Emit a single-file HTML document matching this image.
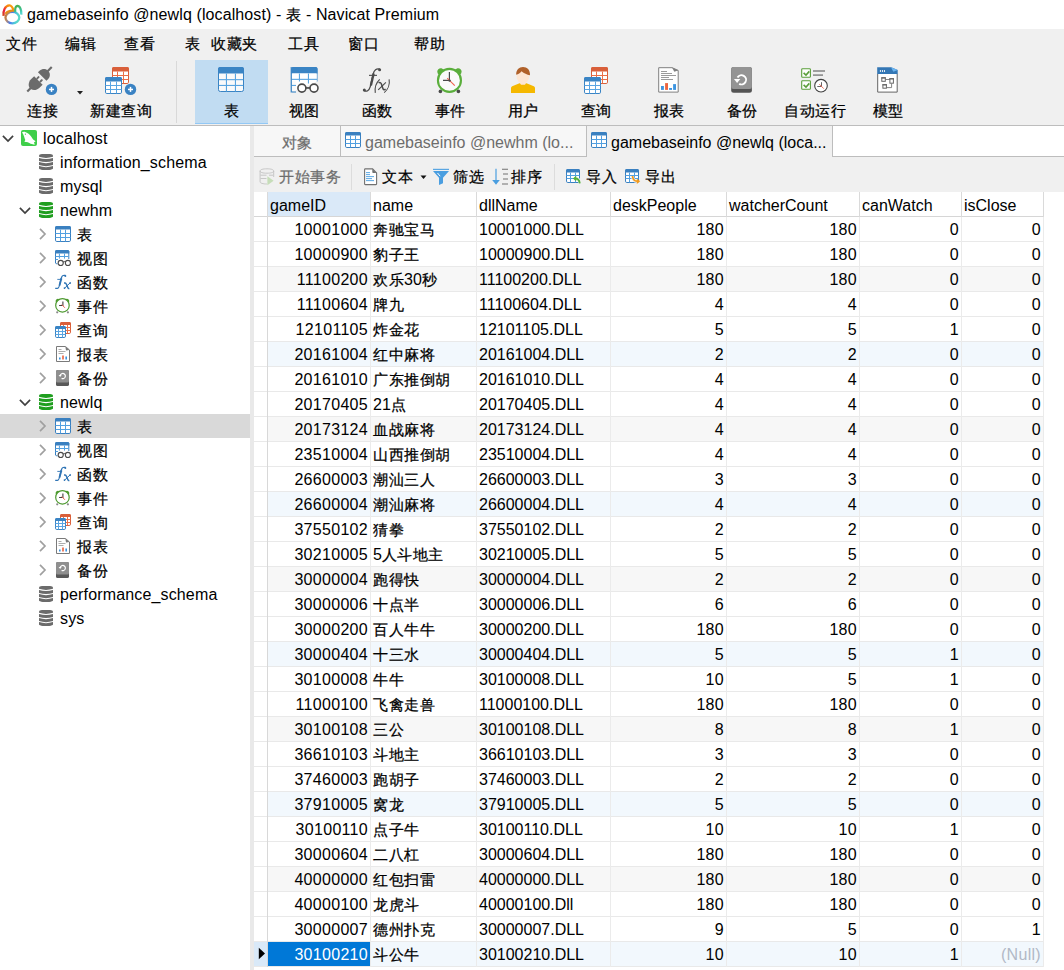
<!DOCTYPE html><html><head><meta charset="utf-8"><style>*{box-sizing:border-box;margin:0;padding:0}
html,body{width:1064px;height:970px;overflow:hidden;background:#f0f0f0;font-family:"Liberation Sans",sans-serif;font-size:16px;color:#000;position:relative}
.a{position:absolute;white-space:nowrap}
#title{position:absolute;left:0;top:0;width:1064px;height:29px;background:#fff}
#title .t{position:absolute;left:27px;top:0;line-height:29px;font-size:16px;letter-spacing:0.1px}
.menu{position:absolute;top:30px;line-height:28px;font-size:16px}
.tbtn{position:absolute;top:60px;width:73px;height:64px;text-align:center}
.tbtn .lbl{position:absolute;left:0;top:99px;width:73px;text-align:center;line-height:24px}
#tbsel{position:absolute;left:195px;top:60px;width:73px;height:64px;background:#c1dcf2;border-bottom:1px solid #92c8f5}
#tbsep{position:absolute;left:176px;top:61px;width:1px;height:62px;background:#d9d9d9}
#tbline{position:absolute;left:0;top:125px;width:1064px;height:1px;background:#bdbdbd}
#left{position:absolute;left:0;top:126px;width:250px;height:844px;background:#fff}
#split{position:absolute;left:250px;top:126px;width:4px;height:844px;background:#e9e9e9}
.tr{position:absolute;left:0;width:250px;height:24px;line-height:24px}
.tr .tx{position:absolute;top:0}
.trsel{background:#d9d9d9}
#tabs{position:absolute;left:254px;top:126px;width:810px;height:31px}
.tab{position:absolute;top:0;height:31px;line-height:33px;color:#6d6d6d;background:#f7f7f7;border-bottom:1px solid #bdbdbd}
#grid{position:absolute;left:254px;top:192px;width:810px;height:778px;background:#fff}
#gridwrap{position:absolute;left:0;top:0}
.hdr{position:absolute;left:254px;width:789px;height:25px;background:#fff;border-bottom:1px solid #d6d6d6}
.hc{position:absolute;height:24px;line-height:28px;padding-left:2px}
.hsel{background:#dae9f8}
.row{position:absolute;left:254px;width:789px;height:25px;background:#fff;border-bottom:1px solid #e9e9e9}
.rg{background:#f7f7f7}
.rb{background:#f2f8fd}
.c{position:absolute;height:24px;line-height:26px;white-space:nowrap;overflow:hidden}
.c.r{text-align:right;padding-right:2px;letter-spacing:0.3px}
.c.l{padding-left:2px}
.csel{background:#0078d7;color:#fff}
.null{color:#b1b8c6}
.vl{position:absolute;width:1px;background:#e3e3e3}
.tl{position:absolute;top:99px;width:100px;text-align:center;line-height:24px;white-space:nowrap}
.tx{position:absolute;line-height:26px;white-space:nowrap;letter-spacing:0.15px}
.t2{position:absolute;top:166px;line-height:22px;white-space:nowrap}
.cj{font-size:15px;letter-spacing:0.5px;-webkit-text-stroke:0.25px currentColor}
</style></head><body>
<div id="title">
<svg class="a" style="left:0;top:0" width="26" height="28" viewBox="0 0 26 28">
<ellipse cx="12.4" cy="17.6" rx="6.9" ry="5.7" fill="none" stroke="url(#lgb)" stroke-width="2.3"/>
<path d="M3.6,15.8 C2.8,10.5 5.3,5.6 9.3,5.3 C11.8,5.1 12.8,7.6 14.1,11.4" fill="none" stroke="url(#lgl)" stroke-width="2.3"/>
<path d="M5.4,13.8 C7,11.4 9.6,10.4 13.6,10.6" fill="none" stroke="#e58d1c" stroke-width="2.1"/>
<path d="M15.2,12.4 C14.9,8.3 15.9,6.1 17.3,5.9 C19.9,5.9 21.6,9.6 21.3,14.6" fill="none" stroke="url(#lgr)" stroke-width="2.3"/>
<defs>
<linearGradient id="lgb" x1="0" y1="0" x2="1" y2="0.2"><stop offset="0" stop-color="#c4722e"/><stop offset=".2" stop-color="#b98a6a"/><stop offset=".5" stop-color="#4a7ef0"/><stop offset=".8" stop-color="#4cc8d8"/><stop offset="1" stop-color="#5ad8c8"/></linearGradient>
<linearGradient id="lgl" x1="0" y1="1" x2="1" y2="0"><stop offset="0" stop-color="#d2481a"/><stop offset=".3" stop-color="#ea1a40"/><stop offset=".6" stop-color="#f7840e"/><stop offset="1" stop-color="#f9a80c"/></linearGradient>
<linearGradient id="lgr" x1="0" y1="0" x2="0.3" y2="1"><stop offset="0" stop-color="#4aae48"/><stop offset=".6" stop-color="#3cc090"/><stop offset="1" stop-color="#54d6cc"/></linearGradient>
</defs></svg>
<div class="t">gamebaseinfo @newlq (localhost) - <span class="cj">表</span> - Navicat Premium</div></div>
<div class="menu" style="left:6px"><span class="cj">文件</span></div>
<div class="menu" style="left:65px"><span class="cj">编辑</span></div>
<div class="menu" style="left:124px"><span class="cj">查看</span></div>
<div class="menu" style="left:185px"><span class="cj">表</span></div>
<div class="menu" style="left:211px"><span class="cj">收藏夹</span></div>
<div class="menu" style="left:288px"><span class="cj">工具</span></div>
<div class="menu" style="left:348px"><span class="cj">窗口</span></div>
<div class="menu" style="left:414px"><span class="cj">帮助</span></div>
<div id="tbsel"></div><div id="tbsep"></div><div id="tbline"></div>
<div class="tl" style="left:-7.5px"><span class="cj">连接</span></div>
<div class="tl" style="left:71px"><span class="cj">新建查询</span></div>
<div class="tl" style="left:181.5px"><span class="cj">表</span></div>
<div class="tl" style="left:254px"><span class="cj">视图</span></div>
<div class="tl" style="left:327px"><span class="cj">函数</span></div>
<div class="tl" style="left:400px"><span class="cj">事件</span></div>
<div class="tl" style="left:473px"><span class="cj">用户</span></div>
<div class="tl" style="left:546px"><span class="cj">查询</span></div>
<div class="tl" style="left:619px"><span class="cj">报表</span></div>
<div class="tl" style="left:692px"><span class="cj">备份</span></div>
<div class="tl" style="left:765px"><span class="cj">自动运行</span></div>
<div class="tl" style="left:838px"><span class="cj">模型</span></div>
<svg class="a" style="left:24px;top:64px" width="36" height="34" viewBox="0 0 36 34">
<g transform="translate(15.5,15.3) rotate(-45)">
<path d="M-1.6,-6 L-6,-6 C-10,-6 -12.6,-3.2 -12.9,-1.3 L-12.9,1.3 C-12.6,3.2 -10,6 -6,6 L-1.6,6 Z" fill="#6b6b6b"/>
<rect x="-1.8" y="-3.2" width="3.6" height="1.9" rx="0.6" fill="#6b6b6b"/><rect x="-1.8" y="1.3" width="3.6" height="1.9" rx="0.6" fill="#6b6b6b"/>
<rect x="-17.3" y="-1.1" width="5" height="2.2" fill="#6b6b6b"/>
<path d="M3.8,-6 L6,-6 C9.8,-6 12,-3 12,-1 L12,1 C12,3 9.8,6 6,6 L3.8,6 Z" fill="#6b6b6b"/>
<rect x="11.5" y="-1.1" width="5.8" height="2.2" fill="#6b6b6b"/>
</g>
<circle cx="27.5" cy="25.4" r="5.7" fill="#3a82c3"/><rect x="25" y="24.7" width="5" height="1.5" fill="#fff"/><rect x="26.75" y="22.9" width="1.5" height="5" fill="#fff"/>
</svg>
<svg class="a" style="left:76px;top:90px" width="8" height="6" viewBox="0 0 8 6"><path d="M1,1 H7 L4,4.5 Z" fill="#222"/></svg>
<svg class="a" style="left:112px;top:67px" width="17" height="17" viewBox="0 0 17 17"><rect x="0.5" y="0.5" width="16" height="16" rx="1.3" fill="#fff" stroke="#d95f3a"/><path d="M0,1.5 Q0,0 1.5,0 H15.5 Q17,0 17,1.5 V4.5 H0 Z" fill="#d95f3a"/><rect x="5" y="4.5" width="1" height="12.0" fill="#ea7048"/><rect x="11" y="4.5" width="1" height="12.0" fill="#ea7048"/><rect x="0.5" y="8" width="16" height="1" fill="#ea7048"/><rect x="0.5" y="12" width="16" height="1" fill="#ea7048"/></svg>
<svg class="a" style="left:105px;top:77px" width="17" height="17" viewBox="0 0 17 17"><rect x="0.5" y="0.5" width="16" height="16" rx="1.3" fill="#fff" stroke="#3a84c4"/><path d="M0,1.5 Q0,0 1.5,0 H15.5 Q17,0 17,1.5 V4.5 H0 Z" fill="#3a84c4"/><rect x="5" y="4.5" width="1" height="12.0" fill="#5aa5e2"/><rect x="11" y="4.5" width="1" height="12.0" fill="#5aa5e2"/><rect x="0.5" y="8" width="16" height="1" fill="#5aa5e2"/><rect x="0.5" y="12" width="16" height="1" fill="#5aa5e2"/></svg>
<svg class="a" style="left:124px;top:83px" width="13" height="13" viewBox="0 0 13 13"><circle cx="6.5" cy="6.4" r="5.7" fill="#3a82c3"/><rect x="4" y="5.7" width="5" height="1.5" fill="#fff"/><rect x="5.75" y="3.9" width="1.5" height="5" fill="#fff"/></svg>
<svg class="a" style="left:218px;top:67px" width="26" height="25" viewBox="0 0 26 25">
<rect x="0.5" y="0.5" width="25" height="24" rx="1.8" fill="#fafafa" stroke="#3a84c4"/>
<path d="M0,2 Q0,0 2,0 H24 Q26,0 26,2 V6.5 H0 Z" fill="#3a84c4"/>
<rect x="7.9" y="6.5" width="1.1" height="18" fill="#58a4e0"/><rect x="16.9" y="6.5" width="1.1" height="18" fill="#58a4e0"/>
<rect x="0.8" y="12.1" width="24.4" height="1.1" fill="#58a4e0"/><rect x="0.8" y="17.9" width="24.4" height="1.1" fill="#58a4e0"/>
</svg>
<svg class="a" style="left:290px;top:66px" width="32" height="28" viewBox="0 0 32 28">
<path d="M1.7,26 V2.6 Q1.7,1.5 2.8,1.5 H25.9 Q27,1.5 27,2.6 V15.5" fill="#fff" stroke="#3a84c4" stroke-width="1"/>
<path d="M1.2,3 Q1.2,1 3.2,1 H25.5 Q27.5,1 27.5,3 V7.5 H1.2 Z" fill="#3a84c4"/>
<rect x="1.7" y="7.5" width="25" height="8" fill="#fff"/>
<rect x="1.7" y="15" width="4" height="10.5" fill="#fafafa"/>
<rect x="8.9" y="7.5" width="1.1" height="8" fill="#58a4e0"/><rect x="17.9" y="7.5" width="1.1" height="10" fill="#58a4e0"/>
<rect x="1.7" y="12.8" width="25.3" height="1.1" fill="#58a4e0"/><rect x="1.7" y="18.9" width="4.3" height="1.1" fill="#58a4e0"/>
<path d="M1.7,26 H6" stroke="#3a84c4" stroke-width="1.1"/><path d="M1.2,1 V26.5" stroke="#3a84c4" stroke-width="1.1"/>
<circle cx="11.9" cy="22.1" r="4" fill="#fff" stroke="#4a4a4a" stroke-width="1.6"/>
<circle cx="24" cy="22.1" r="4" fill="#fff" stroke="#4a4a4a" stroke-width="1.6"/>
<rect x="15.6" y="21.1" width="4.6" height="1.7" fill="#4a4a4a"/>
</svg>
<svg class="a" style="left:359px;top:63px" width="36" height="34" viewBox="0 0 36 34">
<path d="M5,27.4 C7.5,29.2 10,27.8 11.3,23.6 L14.1,11.2 C15.1,7.1 17.4,5.1 20.8,6.1" fill="none" stroke="#4a4a4a" stroke-width="1.3"/>
<path d="M11.9,22.5 L14.7,10.6" stroke="#4a4a4a" stroke-width="2.3"/>
<circle cx="5.3" cy="27.1" r="1.5" fill="#4a4a4a"/><circle cx="20.6" cy="6.7" r="1.5" fill="#4a4a4a"/>
<rect x="10" y="11.8" width="8" height="1.1" fill="#4a4a4a"/>
<path d="M20.7,16.3 C17.2,19.6 15.6,25 16.3,29.8" fill="none" stroke="#4a4a4a" stroke-width="1.1"/>
<path d="M30.1,16.3 C31,21 29,26.5 25.2,29.6" fill="none" stroke="#4a4a4a" stroke-width="1.1"/>
<path d="M19.6,19.9 C20.8,19 21.9,19.6 22.4,21 L23.9,25.4 C24.4,26.9 25.4,27.1 26.6,26.2" fill="none" stroke="#4a4a4a" stroke-width="1.5"/>
<path d="M26.9,19.3 L19.2,26.9" fill="none" stroke="#4a4a4a" stroke-width="1.1"/>
</svg>
<svg class="a" style="left:432px;top:63px" width="36" height="34" viewBox="0 0 36 34">
<g transform="translate(8.3,8.3) rotate(-45)"><path d="M-3.6,1.8 C-3.6,-1.4 -2.1,-2.8 0,-2.8 C2.1,-2.8 3.6,-1.4 3.6,1.8 Z" fill="#5aae3b"/></g>
<g transform="translate(26.6,8.3) rotate(45)"><path d="M-3.6,1.8 C-3.6,-1.4 -2.1,-2.8 0,-2.8 C2.1,-2.8 3.6,-1.4 3.6,1.8 Z" fill="#5aae3b"/></g>
<circle cx="8.4" cy="28.4" r="1.8" fill="#4a4a4a"/><circle cx="26.4" cy="28.4" r="1.8" fill="#4a4a4a"/>
<circle cx="17.45" cy="17.4" r="11.5" fill="#fafafa" stroke="#5aae3b" stroke-width="2.1"/>
<path d="M17.4,9.1 V17.4 H11" fill="none" stroke="#4a4a4a" stroke-width="1.2"/>
<path d="M15.2,15.2 L22.8,22.6" stroke="#f2604c" stroke-width="1.1"/>
<circle cx="17.6" cy="17.6" r="1.2" fill="#4a4a4a"/>
</svg>
<svg class="a" style="left:505px;top:63px" width="36" height="34" viewBox="0 0 36 34">
<path d="M6,30 V25 Q6,23.8 7.2,23.3 L14.5,20.3 H21.5 L28.8,23.3 Q30,23.8 30,25 V30 Z" fill="#f5b800"/>
<path d="M14.6,19.5 H21.4 L20,21.8 H16 Z" fill="#fde6d3"/>
<ellipse cx="17.9" cy="13.6" rx="6.3" ry="6.8" fill="#fde6d3"/>
<path d="M11.2,11.8 C11,6.8 14,4 18,4 C22.2,4 25.2,6.8 25,12.2 C22,11.6 19,10.2 16.5,8.2 C15.2,10 13.4,11.3 11.2,11.8 Z" fill="#b0612a"/>
</svg>
<svg class="a" style="left:591px;top:67px" width="17" height="17" viewBox="0 0 17 17"><rect x="0.5" y="0.5" width="16" height="16" rx="1.3" fill="#fff" stroke="#d95f3a"/><path d="M0,1.5 Q0,0 1.5,0 H15.5 Q17,0 17,1.5 V4.5 H0 Z" fill="#d95f3a"/><rect x="5" y="4.5" width="1" height="12.0" fill="#ea7048"/><rect x="11" y="4.5" width="1" height="12.0" fill="#ea7048"/><rect x="0.5" y="8" width="16" height="1" fill="#ea7048"/><rect x="0.5" y="12" width="16" height="1" fill="#ea7048"/></svg>
<svg class="a" style="left:584px;top:77px" width="17" height="17" viewBox="0 0 17 17"><rect x="0.5" y="0.5" width="16" height="16" rx="1.3" fill="#fff" stroke="#3a84c4"/><path d="M0,1.5 Q0,0 1.5,0 H15.5 Q17,0 17,1.5 V4.5 H0 Z" fill="#3a84c4"/><rect x="5" y="4.5" width="1" height="12.0" fill="#5aa5e2"/><rect x="11" y="4.5" width="1" height="12.0" fill="#5aa5e2"/><rect x="0.5" y="8" width="16" height="1" fill="#5aa5e2"/><rect x="0.5" y="12" width="16" height="1" fill="#5aa5e2"/></svg>
<svg class="a" style="left:651px;top:63px" width="36" height="34" viewBox="0 0 36 34">
<path d="M7.7,4.7 H21.2 L27.2,7.5 V29.1 H7.7 Z" fill="#fff" stroke="#808080" stroke-width="1"/>
<path d="M21,4.4 L27.6,7.3 L23.3,8.8 Z" fill="#808080"/>
<rect x="10" y="8" width="6" height="0.9" fill="#909090"/><rect x="10" y="10" width="11" height="0.9" fill="#909090"/><rect x="10" y="12" width="15" height="0.9" fill="#909090"/><rect x="10" y="14" width="8" height="0.9" fill="#909090"/><rect x="10" y="16" width="12" height="0.9" fill="#909090"/>
<rect x="10" y="23" width="2.9" height="3.9" fill="#3d95e0"/><rect x="14.1" y="20.1" width="2.9" height="6.8" fill="#ec6540"/><rect x="18.1" y="25" width="2.9" height="1.9" fill="#3d95e0"/><rect x="22.1" y="21.1" width="2.9" height="5.8" fill="#3d95e0"/>
</svg>
<svg class="a" style="left:724px;top:63px" width="36" height="34" viewBox="0 0 36 34">
<rect x="7.2" y="4" width="20.7" height="25.8" rx="2.5" fill="#545454"/>
<rect x="7.2" y="4" width="20.7" height="22" rx="2.2" fill="#949494"/>
<path d="M13.5,14.5 A4.6,4.6 0 1 1 15.2,20.8" fill="none" stroke="#fff" stroke-width="1.9"/>
<path d="M10,16 L16.3,16 L13.1,20 Z" fill="#fff"/>
</svg>
<svg class="a" style="left:797px;top:63px" width="36" height="34" viewBox="0 0 36 34">
<rect x="4.7" y="5.7" width="8.7" height="8.5" rx="0.8" fill="#fff" stroke="#5a9e3a" stroke-width="1.1"/>
<rect x="4.7" y="17.7" width="8.7" height="8.5" rx="0.8" fill="#fff" stroke="#5a9e3a" stroke-width="1.1"/>
<path d="M6.6,9.8 L9,12 L12.3,8.4" fill="none" stroke="#5a9e3a" stroke-width="1.6"/>
<path d="M6.6,21.8 L9,24 L12.3,20.4" fill="none" stroke="#5a9e3a" stroke-width="1.6"/>
<rect x="16" y="7.2" width="12" height="1.6" fill="#8a8a8a"/><rect x="16" y="11.3" width="10" height="1.6" fill="#8a8a8a"/>
<circle cx="24" cy="22.7" r="6.3" fill="#fff" stroke="#404040" stroke-width="1.1"/>
<path d="M24.5,19.2 V23.5 H20.3" fill="none" stroke="#555" stroke-width="0.9"/>
<path d="M22.3,21.2 L26.8,25.7" stroke="#f2604c" stroke-width="0.9"/>
</svg>
<svg class="a" style="left:870px;top:63px" width="36" height="34" viewBox="0 0 36 34">
<path d="M7.7,10.8 V29.1 H27.2 V10.8" fill="#fff" stroke="#666" stroke-width="1"/>
<path d="M7.2,4.2 H21.2 L27.7,7 V10.9 H7.2 Z" fill="#3477b5"/>
<path d="M21,4.2 L27.7,7 L23.3,8.8 Z" fill="#6ab4f0"/>
<ellipse cx="10.4" cy="8" rx="0.6" ry="1" fill="#fff"/><ellipse cx="12.5" cy="8" rx="0.6" ry="1" fill="#fff"/><ellipse cx="14.5" cy="8" rx="0.6" ry="1" fill="#fff"/>
<path d="M15.5,16.5 H20 M21.6,20.5 V24.6 H16.5" fill="none" stroke="#777" stroke-width="0.9"/>
<rect x="11.8" y="14.8" width="3.5" height="3.5" fill="#fff" stroke="#666" stroke-width="1"/><rect x="11.3" y="14.3" width="4.5" height="1.2" fill="#666"/>
<rect x="19.9" y="15.7" width="3.5" height="4.5" fill="#fff" stroke="#666" stroke-width="1"/><rect x="19.4" y="15.2" width="4.5" height="1.2" fill="#666"/>
<rect x="12.9" y="21.7" width="3.5" height="3.5" fill="#fff" stroke="#666" stroke-width="1"/><rect x="12.4" y="21.2" width="4.5" height="1.2" fill="#666"/>
</svg>
<div id="left"></div><div id="split"></div>
<div class="trsel" style="position:absolute;left:0;top:414px;width:250px;height:24px"></div>
<svg class="a" style="left:1.5px;top:135px" width="12" height="8" viewBox="0 0 12 8"><path d="M0.9,0.9 L6,6 L11.1,0.9" fill="none" stroke="#404040" stroke-width="1.7"/></svg>
<svg class="a" style="left:21px;top:130px" width="16" height="16" viewBox="0 0 16 16"><rect width="16" height="16" rx="2" fill="#3fcf4a"/><path d="M1,2.3 C2,1.6 3.2,1.5 4.2,1.9 C6.5,2.8 8.8,4.2 10.5,7 C11.5,8.8 12.5,10.2 14.6,11.2 L12.9,12.4 L13.9,14.6 C11.8,14.4 10,14 8.3,13 C7,12.4 6,11.8 5,12 L3.4,11.8 L4.3,10 C3.8,8.8 3.4,7.8 3.1,6.5 C2.6,5 1.8,3.6 1,2.3 Z" fill="#fff"/><circle cx="4.4" cy="4.2" r="0.6" fill="#3fcf4a"/></svg>
<div class="tx" style="left:43px;top:126px">localhost</div>
<svg class="a" style="left:39px;top:154px" width="14" height="16" viewBox="0 0 14 16"><path d="M0,1.6 C0,0.3 3.5,-0.3 7,-0.3 C10.5,-0.3 14,0.3 14,1.6 V14.6 C14,15.5 10.5,16.2 7,16.2 C3.5,16.2 0,15.5 0,14.6 Z" fill="#6b6b6b"/><path d="M-0.5,3.2 Q7,5.800000000000001 14.5,3.2" fill="none" stroke="#fff" stroke-width="1.05"/><path d="M-0.5,7.3 Q7,9.9 14.5,7.3" fill="none" stroke="#fff" stroke-width="1.05"/><path d="M-0.5,11.4 Q7,14.0 14.5,11.4" fill="none" stroke="#fff" stroke-width="1.05"/></svg>
<div class="tx" style="left:60px;top:150px">information_schema</div>
<svg class="a" style="left:39px;top:178px" width="14" height="16" viewBox="0 0 14 16"><path d="M0,1.6 C0,0.3 3.5,-0.3 7,-0.3 C10.5,-0.3 14,0.3 14,1.6 V14.6 C14,15.5 10.5,16.2 7,16.2 C3.5,16.2 0,15.5 0,14.6 Z" fill="#6b6b6b"/><path d="M-0.5,3.2 Q7,5.800000000000001 14.5,3.2" fill="none" stroke="#fff" stroke-width="1.05"/><path d="M-0.5,7.3 Q7,9.9 14.5,7.3" fill="none" stroke="#fff" stroke-width="1.05"/><path d="M-0.5,11.4 Q7,14.0 14.5,11.4" fill="none" stroke="#fff" stroke-width="1.05"/></svg>
<div class="tx" style="left:60px;top:174px">mysql</div>
<svg class="a" style="left:18.5px;top:207px" width="12" height="8" viewBox="0 0 12 8"><path d="M0.9,0.9 L6,6 L11.1,0.9" fill="none" stroke="#404040" stroke-width="1.7"/></svg>
<svg class="a" style="left:39px;top:202px" width="14" height="16" viewBox="0 0 14 16"><path d="M0,1.6 C0,0.3 3.5,-0.3 7,-0.3 C10.5,-0.3 14,0.3 14,1.6 V14.6 C14,15.5 10.5,16.2 7,16.2 C3.5,16.2 0,15.5 0,14.6 Z" fill="#1f9e1f"/><path d="M-0.5,3.2 Q7,5.800000000000001 14.5,3.2" fill="none" stroke="#fff" stroke-width="1.05"/><path d="M-0.5,7.3 Q7,9.9 14.5,7.3" fill="none" stroke="#fff" stroke-width="1.05"/><path d="M-0.5,11.4 Q7,14.0 14.5,11.4" fill="none" stroke="#fff" stroke-width="1.05"/></svg>
<div class="tx" style="left:60px;top:198px">newhm</div>
<svg class="a" style="left:38.5px;top:228px" width="8" height="12" viewBox="0 0 8 12"><path d="M1,0.9 L6,6 L1,11.1" fill="none" stroke="#a0a0a0" stroke-width="1.7"/></svg>
<svg class="a" style="left:55px;top:226px" width="16" height="16" viewBox="0 0 16 16"><rect x="0.5" y="0.5" width="15" height="15" rx="1.3" fill="#fff" stroke="#3a80c0"/><path d="M0,1.5 Q0,0 1.5,0 H14.5 Q16,0 16,1.5 V3.6 H0 Z" fill="#3a80c0"/><rect x="5" y="3.6" width="1" height="11.9" fill="#52a0e0"/><rect x="10" y="3.6" width="1" height="11.9" fill="#52a0e0"/><rect x="0.5" y="7" width="15" height="1" fill="#52a0e0"/><rect x="0.5" y="11" width="15" height="1" fill="#52a0e0"/></svg>
<div class="tx" style="left:77px;top:222px"><span class="cj">表</span></div>
<svg class="a" style="left:38.5px;top:252px" width="8" height="12" viewBox="0 0 8 12"><path d="M1,0.9 L6,6 L1,11.1" fill="none" stroke="#a0a0a0" stroke-width="1.7"/></svg>
<svg class="a" style="left:55px;top:250px" width="18" height="16" viewBox="0 0 18 16"><path d="M0.5,13 V1.5 Q0.5,0.5 1.5,0.5 H12.8 Q13.8,0.5 13.8,1.5 V9" fill="#fff" stroke="#3a80c0"/><path d="M0,1.5 Q0,0 1.5,0 H12.8 Q14.3,0 14.3,1.5 V3.6 H0 Z" fill="#3a80c0"/><path d="M0.5,12.5 Q0.5,13.8 1.8,13.8 H2.5" fill="none" stroke="#3a80c0"/><rect x="3.9" y="3.6" width="1" height="5" fill="#52a0e0"/><rect x="9" y="3.6" width="1" height="5" fill="#52a0e0"/><rect x="0.5" y="6" width="13" height="1" fill="#52a0e0"/><rect x="0.5" y="9" width="2.5" height="1" fill="#52a0e0"/><circle cx="5.7" cy="12.9" r="2.55" fill="#fff" stroke="#4a4a4a" stroke-width="1.1"/><circle cx="12.9" cy="12.9" r="2.55" fill="#fff" stroke="#4a4a4a" stroke-width="1.1"/><path d="M8,12.2 Q9.3,10.8 10.6,12.2" fill="none" stroke="#4a4a4a" stroke-width="1"/></svg>
<div class="tx" style="left:77px;top:246px"><span class="cj">视图</span></div>
<svg class="a" style="left:38.5px;top:276px" width="8" height="12" viewBox="0 0 8 12"><path d="M1,0.9 L6,6 L1,11.1" fill="none" stroke="#a0a0a0" stroke-width="1.7"/></svg>
<svg class="a" style="left:55px;top:274px" width="18" height="16" viewBox="0 0 18 16"><path d="M0.2,14.3 H2.6 C3.4,14.3 3.8,13.6 4.2,12.2 L6.3,4 C6.8,2.2 7.6,1.4 9.3,1.3 H10.6" fill="none" stroke="#2f74b5" stroke-width="1.15"/><path d="M4.5,11.5 L6.4,4.2" stroke="#2f74b5" stroke-width="1.8"/><circle cx="10.3" cy="1.9" r="1" fill="#2f74b5"/><rect x="2.3" y="4.9" width="4.8" height="0.9" fill="#2f74b5"/><path d="M9,8.9 H10.1 Q10.9,8.9 11.3,10 L13,14 Q13.4,14.8 14.3,14.3" fill="none" stroke="#2f74b5" stroke-width="1.5"/><path d="M15.6,8.4 L9.2,14.6" stroke="#2f74b5" stroke-width="1"/><circle cx="15" cy="9.2" r="0.9" fill="#2f74b5"/><circle cx="9.5" cy="14.1" r="0.9" fill="#2f74b5"/></svg>
<div class="tx" style="left:77px;top:270px"><span class="cj">函数</span></div>
<svg class="a" style="left:38.5px;top:300px" width="8" height="12" viewBox="0 0 8 12"><path d="M1,0.9 L6,6 L1,11.1" fill="none" stroke="#a0a0a0" stroke-width="1.7"/></svg>
<svg class="a" style="left:55px;top:298px" width="16" height="16" viewBox="0 0 16 16"><circle cx="2.2" cy="14.3" r="1.1" fill="#8a8a8a"/><circle cx="12.9" cy="14.3" r="1.1" fill="#8a8a8a"/><g transform="translate(2.6,2.7) rotate(-45)"><path d="M-2.4,1.2 C-2.4,-1 -1.3,-1.8 0,-1.8 C1.3,-1.8 2.4,-1 2.4,1.2 Z" fill="#4e9a30"/></g><g transform="translate(12.3,2.7) rotate(45)"><path d="M-2.4,1.2 C-2.4,-1 -1.3,-1.8 0,-1.8 C1.3,-1.8 2.4,-1 2.4,1.2 Z" fill="#4e9a30"/></g><circle cx="7.45" cy="7.4" r="6.75" fill="#fff" stroke="#4e9a30" stroke-width="1.2"/><path d="M7.9,3.6 V7.5 H4.1" fill="none" stroke="#404040" stroke-width="1.1"/><path d="M6.8,6.6 L9.9,9.8" stroke="#f0604a" stroke-width="1"/></svg>
<div class="tx" style="left:77px;top:294px"><span class="cj">事件</span></div>
<svg class="a" style="left:38.5px;top:324px" width="8" height="12" viewBox="0 0 8 12"><path d="M1,0.9 L6,6 L1,11.1" fill="none" stroke="#a0a0a0" stroke-width="1.7"/></svg>
<svg class="a" style="left:60px;top:322px" width="11" height="12" viewBox="0 0 11 12"><rect x="0.5" y="0.5" width="10" height="11" rx="1.3" fill="#fff" stroke="#d95f3a"/><path d="M0,1.5 Q0,0 1.5,0 H9.5 Q11,0 11,1.5 V3 H0 Z" fill="#d95f3a"/><rect x="3" y="3" width="1" height="8.5" fill="#ea7048"/><rect x="7" y="3" width="1" height="8.5" fill="#ea7048"/><rect x="0.5" y="5" width="10" height="1" fill="#ea7048"/><rect x="0.5" y="8" width="10" height="1" fill="#ea7048"/></svg><svg class="a" style="left:55px;top:326px" width="11" height="12" viewBox="0 0 11 12"><rect x="0.5" y="0.5" width="10" height="11" rx="1.3" fill="#fff" stroke="#3a84c4"/><path d="M0,1.5 Q0,0 1.5,0 H9.5 Q11,0 11,1.5 V3 H0 Z" fill="#3a84c4"/><rect x="3" y="3" width="1" height="8.5" fill="#5aa5e2"/><rect x="7" y="3" width="1" height="8.5" fill="#5aa5e2"/><rect x="0.5" y="5" width="10" height="1" fill="#5aa5e2"/><rect x="0.5" y="8" width="10" height="1" fill="#5aa5e2"/></svg>
<div class="tx" style="left:77px;top:318px"><span class="cj">查询</span></div>
<svg class="a" style="left:38.5px;top:348px" width="8" height="12" viewBox="0 0 8 12"><path d="M1,0.9 L6,6 L1,11.1" fill="none" stroke="#a0a0a0" stroke-width="1.7"/></svg>
<svg class="a" style="left:56px;top:346px" width="14" height="16" viewBox="0 0 14 16"><path d="M0.5,0.5 H9.5 L13.5,4 V15.5 H0.5 Z" fill="#fff" stroke="#7a7a7a"/><path d="M9.3,0.5 L13.5,4 L10,4.5 Z" fill="#7a7a7a"/><rect x="2.5" y="3" width="3" height="0.8" fill="#999"/><rect x="2.5" y="5" width="7" height="0.8" fill="#999"/><rect x="2.5" y="7" width="5" height="0.8" fill="#999"/><rect x="3" y="11.5" width="1.6" height="2" fill="#3a93e0"/><rect x="6.2" y="9.5" width="1.6" height="4" fill="#e8603c"/><rect x="9.4" y="10.5" width="1.6" height="3" fill="#3a93e0"/></svg>
<div class="tx" style="left:77px;top:342px"><span class="cj">报表</span></div>
<svg class="a" style="left:38.5px;top:372px" width="8" height="12" viewBox="0 0 8 12"><path d="M1,0.9 L6,6 L1,11.1" fill="none" stroke="#a0a0a0" stroke-width="1.7"/></svg>
<svg class="a" style="left:56px;top:370px" width="14" height="16" viewBox="0 0 14 16"><rect x="0" y="0" width="13" height="16" rx="1.6" fill="#595959"/><rect x="0" y="0" width="13" height="12.5" rx="1.6" fill="#8f8f8f"/><path d="M4.3,5.2 A2.6,2.6 0 1 1 5.6,8.4" fill="none" stroke="#fff" stroke-width="1.2"/><path d="M2.6,4.9 L5.6,4.9 L4.1,6.9 Z" fill="#fff"/></svg>
<div class="tx" style="left:77px;top:366px"><span class="cj">备份</span></div>
<svg class="a" style="left:18.5px;top:399px" width="12" height="8" viewBox="0 0 12 8"><path d="M0.9,0.9 L6,6 L11.1,0.9" fill="none" stroke="#404040" stroke-width="1.7"/></svg>
<svg class="a" style="left:39px;top:394px" width="14" height="16" viewBox="0 0 14 16"><path d="M0,1.6 C0,0.3 3.5,-0.3 7,-0.3 C10.5,-0.3 14,0.3 14,1.6 V14.6 C14,15.5 10.5,16.2 7,16.2 C3.5,16.2 0,15.5 0,14.6 Z" fill="#1f9e1f"/><path d="M-0.5,3.2 Q7,5.800000000000001 14.5,3.2" fill="none" stroke="#fff" stroke-width="1.05"/><path d="M-0.5,7.3 Q7,9.9 14.5,7.3" fill="none" stroke="#fff" stroke-width="1.05"/><path d="M-0.5,11.4 Q7,14.0 14.5,11.4" fill="none" stroke="#fff" stroke-width="1.05"/></svg>
<div class="tx" style="left:60px;top:390px">newlq</div>
<svg class="a" style="left:38.5px;top:420px" width="8" height="12" viewBox="0 0 8 12"><path d="M1,0.9 L6,6 L1,11.1" fill="none" stroke="#a0a0a0" stroke-width="1.7"/></svg>
<svg class="a" style="left:55px;top:418px" width="16" height="16" viewBox="0 0 16 16"><rect x="0.5" y="0.5" width="15" height="15" rx="1.3" fill="#fff" stroke="#3a80c0"/><path d="M0,1.5 Q0,0 1.5,0 H14.5 Q16,0 16,1.5 V3.6 H0 Z" fill="#3a80c0"/><rect x="5" y="3.6" width="1" height="11.9" fill="#52a0e0"/><rect x="10" y="3.6" width="1" height="11.9" fill="#52a0e0"/><rect x="0.5" y="7" width="15" height="1" fill="#52a0e0"/><rect x="0.5" y="11" width="15" height="1" fill="#52a0e0"/></svg>
<div class="tx" style="left:77px;top:414px"><span class="cj">表</span></div>
<svg class="a" style="left:38.5px;top:444px" width="8" height="12" viewBox="0 0 8 12"><path d="M1,0.9 L6,6 L1,11.1" fill="none" stroke="#a0a0a0" stroke-width="1.7"/></svg>
<svg class="a" style="left:55px;top:442px" width="18" height="16" viewBox="0 0 18 16"><path d="M0.5,13 V1.5 Q0.5,0.5 1.5,0.5 H12.8 Q13.8,0.5 13.8,1.5 V9" fill="#fff" stroke="#3a80c0"/><path d="M0,1.5 Q0,0 1.5,0 H12.8 Q14.3,0 14.3,1.5 V3.6 H0 Z" fill="#3a80c0"/><path d="M0.5,12.5 Q0.5,13.8 1.8,13.8 H2.5" fill="none" stroke="#3a80c0"/><rect x="3.9" y="3.6" width="1" height="5" fill="#52a0e0"/><rect x="9" y="3.6" width="1" height="5" fill="#52a0e0"/><rect x="0.5" y="6" width="13" height="1" fill="#52a0e0"/><rect x="0.5" y="9" width="2.5" height="1" fill="#52a0e0"/><circle cx="5.7" cy="12.9" r="2.55" fill="#fff" stroke="#4a4a4a" stroke-width="1.1"/><circle cx="12.9" cy="12.9" r="2.55" fill="#fff" stroke="#4a4a4a" stroke-width="1.1"/><path d="M8,12.2 Q9.3,10.8 10.6,12.2" fill="none" stroke="#4a4a4a" stroke-width="1"/></svg>
<div class="tx" style="left:77px;top:438px"><span class="cj">视图</span></div>
<svg class="a" style="left:38.5px;top:468px" width="8" height="12" viewBox="0 0 8 12"><path d="M1,0.9 L6,6 L1,11.1" fill="none" stroke="#a0a0a0" stroke-width="1.7"/></svg>
<svg class="a" style="left:55px;top:466px" width="18" height="16" viewBox="0 0 18 16"><path d="M0.2,14.3 H2.6 C3.4,14.3 3.8,13.6 4.2,12.2 L6.3,4 C6.8,2.2 7.6,1.4 9.3,1.3 H10.6" fill="none" stroke="#2f74b5" stroke-width="1.15"/><path d="M4.5,11.5 L6.4,4.2" stroke="#2f74b5" stroke-width="1.8"/><circle cx="10.3" cy="1.9" r="1" fill="#2f74b5"/><rect x="2.3" y="4.9" width="4.8" height="0.9" fill="#2f74b5"/><path d="M9,8.9 H10.1 Q10.9,8.9 11.3,10 L13,14 Q13.4,14.8 14.3,14.3" fill="none" stroke="#2f74b5" stroke-width="1.5"/><path d="M15.6,8.4 L9.2,14.6" stroke="#2f74b5" stroke-width="1"/><circle cx="15" cy="9.2" r="0.9" fill="#2f74b5"/><circle cx="9.5" cy="14.1" r="0.9" fill="#2f74b5"/></svg>
<div class="tx" style="left:77px;top:462px"><span class="cj">函数</span></div>
<svg class="a" style="left:38.5px;top:492px" width="8" height="12" viewBox="0 0 8 12"><path d="M1,0.9 L6,6 L1,11.1" fill="none" stroke="#a0a0a0" stroke-width="1.7"/></svg>
<svg class="a" style="left:55px;top:490px" width="16" height="16" viewBox="0 0 16 16"><circle cx="2.2" cy="14.3" r="1.1" fill="#8a8a8a"/><circle cx="12.9" cy="14.3" r="1.1" fill="#8a8a8a"/><g transform="translate(2.6,2.7) rotate(-45)"><path d="M-2.4,1.2 C-2.4,-1 -1.3,-1.8 0,-1.8 C1.3,-1.8 2.4,-1 2.4,1.2 Z" fill="#4e9a30"/></g><g transform="translate(12.3,2.7) rotate(45)"><path d="M-2.4,1.2 C-2.4,-1 -1.3,-1.8 0,-1.8 C1.3,-1.8 2.4,-1 2.4,1.2 Z" fill="#4e9a30"/></g><circle cx="7.45" cy="7.4" r="6.75" fill="#fff" stroke="#4e9a30" stroke-width="1.2"/><path d="M7.9,3.6 V7.5 H4.1" fill="none" stroke="#404040" stroke-width="1.1"/><path d="M6.8,6.6 L9.9,9.8" stroke="#f0604a" stroke-width="1"/></svg>
<div class="tx" style="left:77px;top:486px"><span class="cj">事件</span></div>
<svg class="a" style="left:38.5px;top:516px" width="8" height="12" viewBox="0 0 8 12"><path d="M1,0.9 L6,6 L1,11.1" fill="none" stroke="#a0a0a0" stroke-width="1.7"/></svg>
<svg class="a" style="left:60px;top:514px" width="11" height="12" viewBox="0 0 11 12"><rect x="0.5" y="0.5" width="10" height="11" rx="1.3" fill="#fff" stroke="#d95f3a"/><path d="M0,1.5 Q0,0 1.5,0 H9.5 Q11,0 11,1.5 V3 H0 Z" fill="#d95f3a"/><rect x="3" y="3" width="1" height="8.5" fill="#ea7048"/><rect x="7" y="3" width="1" height="8.5" fill="#ea7048"/><rect x="0.5" y="5" width="10" height="1" fill="#ea7048"/><rect x="0.5" y="8" width="10" height="1" fill="#ea7048"/></svg><svg class="a" style="left:55px;top:518px" width="11" height="12" viewBox="0 0 11 12"><rect x="0.5" y="0.5" width="10" height="11" rx="1.3" fill="#fff" stroke="#3a84c4"/><path d="M0,1.5 Q0,0 1.5,0 H9.5 Q11,0 11,1.5 V3 H0 Z" fill="#3a84c4"/><rect x="3" y="3" width="1" height="8.5" fill="#5aa5e2"/><rect x="7" y="3" width="1" height="8.5" fill="#5aa5e2"/><rect x="0.5" y="5" width="10" height="1" fill="#5aa5e2"/><rect x="0.5" y="8" width="10" height="1" fill="#5aa5e2"/></svg>
<div class="tx" style="left:77px;top:510px"><span class="cj">查询</span></div>
<svg class="a" style="left:38.5px;top:540px" width="8" height="12" viewBox="0 0 8 12"><path d="M1,0.9 L6,6 L1,11.1" fill="none" stroke="#a0a0a0" stroke-width="1.7"/></svg>
<svg class="a" style="left:56px;top:538px" width="14" height="16" viewBox="0 0 14 16"><path d="M0.5,0.5 H9.5 L13.5,4 V15.5 H0.5 Z" fill="#fff" stroke="#7a7a7a"/><path d="M9.3,0.5 L13.5,4 L10,4.5 Z" fill="#7a7a7a"/><rect x="2.5" y="3" width="3" height="0.8" fill="#999"/><rect x="2.5" y="5" width="7" height="0.8" fill="#999"/><rect x="2.5" y="7" width="5" height="0.8" fill="#999"/><rect x="3" y="11.5" width="1.6" height="2" fill="#3a93e0"/><rect x="6.2" y="9.5" width="1.6" height="4" fill="#e8603c"/><rect x="9.4" y="10.5" width="1.6" height="3" fill="#3a93e0"/></svg>
<div class="tx" style="left:77px;top:534px"><span class="cj">报表</span></div>
<svg class="a" style="left:38.5px;top:564px" width="8" height="12" viewBox="0 0 8 12"><path d="M1,0.9 L6,6 L1,11.1" fill="none" stroke="#a0a0a0" stroke-width="1.7"/></svg>
<svg class="a" style="left:56px;top:562px" width="14" height="16" viewBox="0 0 14 16"><rect x="0" y="0" width="13" height="16" rx="1.6" fill="#595959"/><rect x="0" y="0" width="13" height="12.5" rx="1.6" fill="#8f8f8f"/><path d="M4.3,5.2 A2.6,2.6 0 1 1 5.6,8.4" fill="none" stroke="#fff" stroke-width="1.2"/><path d="M2.6,4.9 L5.6,4.9 L4.1,6.9 Z" fill="#fff"/></svg>
<div class="tx" style="left:77px;top:558px"><span class="cj">备份</span></div>
<svg class="a" style="left:39px;top:586px" width="14" height="16" viewBox="0 0 14 16"><path d="M0,1.6 C0,0.3 3.5,-0.3 7,-0.3 C10.5,-0.3 14,0.3 14,1.6 V14.6 C14,15.5 10.5,16.2 7,16.2 C3.5,16.2 0,15.5 0,14.6 Z" fill="#6b6b6b"/><path d="M-0.5,3.2 Q7,5.800000000000001 14.5,3.2" fill="none" stroke="#fff" stroke-width="1.05"/><path d="M-0.5,7.3 Q7,9.9 14.5,7.3" fill="none" stroke="#fff" stroke-width="1.05"/><path d="M-0.5,11.4 Q7,14.0 14.5,11.4" fill="none" stroke="#fff" stroke-width="1.05"/></svg>
<div class="tx" style="left:60px;top:582px">performance_schema</div>
<svg class="a" style="left:39px;top:610px" width="14" height="16" viewBox="0 0 14 16"><path d="M0,1.6 C0,0.3 3.5,-0.3 7,-0.3 C10.5,-0.3 14,0.3 14,1.6 V14.6 C14,15.5 10.5,16.2 7,16.2 C3.5,16.2 0,15.5 0,14.6 Z" fill="#6b6b6b"/><path d="M-0.5,3.2 Q7,5.800000000000001 14.5,3.2" fill="none" stroke="#fff" stroke-width="1.05"/><path d="M-0.5,7.3 Q7,9.9 14.5,7.3" fill="none" stroke="#fff" stroke-width="1.05"/><path d="M-0.5,11.4 Q7,14.0 14.5,11.4" fill="none" stroke="#fff" stroke-width="1.05"/></svg>
<div class="tx" style="left:60px;top:606px">sys</div>
<div id="tabs">
<div class="tab" style="left:0;width:87px;text-align:center;border-right:1px solid #bdbdbd"><span class="cj">对象</span></div>
<div class="tab" style="left:87px;width:246px;padding-left:24px;border-right:1px solid #bdbdbd">gamebaseinfo @newhm (lo...</div>
<div class="tab" style="left:333px;width:245px;padding-left:24px;color:#000;background:#f0f0f0;border-bottom:none">gamebaseinfo @newlq (loca...</div>
<div class="tab" style="left:578px;width:232px;background:#fff;border-left:1px solid #bdbdbd"></div>
</div>
<svg class="a" style="left:345px;top:132px" width="16" height="16" viewBox="0 0 16 16"><rect x="0.5" y="0.5" width="15" height="15" rx="1.3" fill="#fff" stroke="#3a80c0"/><path d="M0,1.5 Q0,0 1.5,0 H14.5 Q16,0 16,1.5 V3.6 H0 Z" fill="#3a80c0"/><rect x="5" y="3.6" width="1" height="11.9" fill="#52a0e0"/><rect x="10" y="3.6" width="1" height="11.9" fill="#52a0e0"/><rect x="0.5" y="7" width="15" height="1" fill="#52a0e0"/><rect x="0.5" y="11" width="15" height="1" fill="#52a0e0"/></svg>
<svg class="a" style="left:591px;top:132px" width="16" height="16" viewBox="0 0 16 16"><rect x="0.5" y="0.5" width="15" height="15" rx="1.3" fill="#fff" stroke="#3a80c0"/><path d="M0,1.5 Q0,0 1.5,0 H14.5 Q16,0 16,1.5 V3.6 H0 Z" fill="#3a80c0"/><rect x="5" y="3.6" width="1" height="11.9" fill="#52a0e0"/><rect x="10" y="3.6" width="1" height="11.9" fill="#52a0e0"/><rect x="0.5" y="7" width="15" height="1" fill="#52a0e0"/><rect x="0.5" y="11" width="15" height="1" fill="#52a0e0"/></svg>
<svg class="a" style="left:259px;top:168px" width="22" height="20" viewBox="0 0 22 20">
<path d="M1.1,3 C1.1,1.5 4,0.8 7.9,0.8 C11.8,0.8 14.7,1.5 14.7,3 V9 M14.7,3 C14.7,4.5 11.8,5.2 7.9,5.2 C4,5.2 1.1,4.5 1.1,3 V13.8 C1.1,15.2 4,16 7.9,16" fill="none" stroke="#c2c2c2" stroke-width="0.9"/>
<path d="M1.5,7.2 H7.5 M1.5,10.5 H7.5 M10,7.2 H14" stroke="#c2c2c2" stroke-width="0.9"/>
<path d="M8.4,8.2 L14.6,12.8 L8.4,17.2 Z" fill="#c6ddb9"/>
</svg>
<div class="t2" style="left:279px;color:#6d6d6d"><span class="cj">开始事务</span></div>
<div class="a" style="left:351px;top:164px;width:1px;height:26px;background:#dcdcdc"></div>
<svg class="a" style="left:363px;top:168px" width="16" height="18" viewBox="0 0 16 18">
<path d="M1.6,1.6 Q1.6,0.9 2.3,0.9 H9.6 L13.6,4.9 V16 Q13.6,16.6 12.9,16.6 H2.3 Q1.6,16.6 1.6,16 Z" fill="#fff" stroke="#707070" stroke-width="1.1"/>
<path d="M9.3,0.9 V4.2 Q9.3,5 10.1,5 H13.6 Z" fill="#707070"/>
<rect x="3" y="4.2" width="4" height="0.9" fill="#4a9ee0"/><rect x="3" y="6.2" width="4" height="0.9" fill="#4a9ee0"/><rect x="3" y="8.2" width="8" height="0.9" fill="#4a9ee0"/><rect x="3" y="10.2" width="6" height="0.9" fill="#4a9ee0"/><rect x="3" y="12.2" width="8" height="0.9" fill="#4a9ee0"/>
</svg>
<div class="t2" style="left:382px"><span class="cj">文本</span></div>
<svg class="a" style="left:420px;top:175px" width="7" height="5" viewBox="0 0 7 5"><path d="M0.5,0.5 H6.5 L3.5,4 Z" fill="#111"/></svg>
<svg class="a" style="left:432px;top:168px" width="18" height="18" viewBox="0 0 18 18">
<rect x="1" y="0.8" width="16" height="1.1" fill="#4a9ee0"/>
<path d="M1,3 H17 L11,9.7 V15.3 L7,17 V9.7 Z" fill="#4a9ee0"/>
<path d="M5.5,5 L8.2,8.2" stroke="#fff" stroke-width="1"/>
</svg>
<div class="t2" style="left:453px"><span class="cj">筛选</span></div>
<svg class="a" style="left:491px;top:168px" width="19" height="18" viewBox="0 0 19 18">
<path d="M5,0.8 V15" stroke="#4a9ee0" stroke-width="1.2"/><path d="M1.2,12 L5,16.8 L8.8,12 Z" fill="#4a9ee0"/>
<path d="M11,1.3 H17 M12,6 H17 M12,11 H17 M11,16 H17" stroke="#707070" stroke-width="1.1"/>
</svg>
<div class="t2" style="left:511px"><span class="cj">排序</span></div>
<div class="a" style="left:554px;top:164px;width:1px;height:26px;background:#dcdcdc"></div>
<svg class="a" style="left:566px;top:169px" width="14" height="14" viewBox="0 0 14 14"><rect x="0.5" y="0.5" width="13" height="13" rx="1.3" fill="#fff" stroke="#3a80c0"/><path d="M0,1.5 Q0,0 1.5,0 H12.5 Q14,0 14,1.5 V3.5 H0 Z" fill="#3a80c0"/><rect x="4" y="3.5" width="1" height="10.0" fill="#52a0e0"/><rect x="9" y="3.5" width="1" height="10.0" fill="#52a0e0"/><rect x="0.5" y="6" width="13" height="1" fill="#52a0e0"/><rect x="0.5" y="9" width="13" height="1" fill="#52a0e0"/></svg><svg class="a" style="left:572px;top:175px" width="10" height="10" viewBox="0 0 10 10"><path d="M3,3.5 Q7,3.2 8.2,7.8" fill="none" stroke="#f0f0f0" stroke-width="3"/><path d="M3.5,3.5 Q7,3.5 7.8,8.3" fill="none" stroke="#56b33a" stroke-width="1.8"/><path d="M0.8,3.5 L4.2,0.8 V6.2 Z" fill="#56b33a"/></svg>
<div class="t2" style="left:586px"><span class="cj">导入</span></div>
<svg class="a" style="left:625px;top:169px" width="14" height="14" viewBox="0 0 14 14"><rect x="0.5" y="0.5" width="13" height="13" rx="1.3" fill="#fff" stroke="#3a80c0"/><path d="M0,1.5 Q0,0 1.5,0 H12.5 Q14,0 14,1.5 V3.5 H0 Z" fill="#3a80c0"/><rect x="4" y="3.5" width="1" height="10.0" fill="#52a0e0"/><rect x="9" y="3.5" width="1" height="10.0" fill="#52a0e0"/><rect x="0.5" y="6" width="13" height="1" fill="#52a0e0"/><rect x="0.5" y="9" width="13" height="1" fill="#52a0e0"/></svg><svg class="a" style="left:631px;top:175px" width="10" height="10" viewBox="0 0 10 10"><path d="M1.5,1.5 Q2.3,6.5 6,6.5" fill="none" stroke="#f0f0f0" stroke-width="3"/><path d="M1.5,1 Q2.2,6.2 6,6.2" fill="none" stroke="#f39a1c" stroke-width="1.8"/><path d="M9.2,6.2 L5.8,3.5 V9 Z" fill="#f39a1c"/></svg>
<div class="t2" style="left:645px"><span class="cj">导出</span></div>
<div id="grid"></div>
<div id="gridwrap"><div class="hdr" style="top:192px"></div><div class="hc hsel" style="left:268px;top:192px;width:102px">gameID</div><div class="hc" style="left:371px;top:192px;width:105px">name</div><div class="hc" style="left:477px;top:192px;width:133px">dllName</div><div class="hc" style="left:611px;top:192px;width:115px">deskPeople</div><div class="hc" style="left:727px;top:192px;width:132px">watcherCount</div><div class="hc" style="left:860px;top:192px;width:101px">canWatch</div><div class="hc" style="left:962px;top:192px;width:81px">isClose</div><div class="row" style="top:217px"></div><div class="c r" style="left:268px;top:217px;width:102px">10001000</div><div class="c l" style="left:371px;top:217px;width:105px"><span class="cj">奔驰宝马</span></div><div class="c l" style="left:477px;top:217px;width:133px">10001000.DLL</div><div class="c r" style="left:611px;top:217px;width:115px">180</div><div class="c r" style="left:727px;top:217px;width:132px">180</div><div class="c r" style="left:860px;top:217px;width:101px">0</div><div class="c r" style="left:962px;top:217px;width:81px">0</div><div class="row" style="top:242px"></div><div class="c r" style="left:268px;top:242px;width:102px">10000900</div><div class="c l" style="left:371px;top:242px;width:105px"><span class="cj">豹子王</span></div><div class="c l" style="left:477px;top:242px;width:133px">10000900.DLL</div><div class="c r" style="left:611px;top:242px;width:115px">180</div><div class="c r" style="left:727px;top:242px;width:132px">180</div><div class="c r" style="left:860px;top:242px;width:101px">0</div><div class="c r" style="left:962px;top:242px;width:81px">0</div><div class="row" style="top:267px"></div><div class="rg" style="position:absolute;left:268px;width:775px;height:24px;top:267px"></div><div class="c r" style="left:268px;top:267px;width:102px">11100200</div><div class="c l" style="left:371px;top:267px;width:105px"><span class="cj">欢乐</span>30<span class="cj">秒</span></div><div class="c l" style="left:477px;top:267px;width:133px">11100200.DLL</div><div class="c r" style="left:611px;top:267px;width:115px">180</div><div class="c r" style="left:727px;top:267px;width:132px">180</div><div class="c r" style="left:860px;top:267px;width:101px">0</div><div class="c r" style="left:962px;top:267px;width:81px">0</div><div class="row" style="top:292px"></div><div class="c r" style="left:268px;top:292px;width:102px">11100604</div><div class="c l" style="left:371px;top:292px;width:105px"><span class="cj">牌九</span></div><div class="c l" style="left:477px;top:292px;width:133px">11100604.DLL</div><div class="c r" style="left:611px;top:292px;width:115px">4</div><div class="c r" style="left:727px;top:292px;width:132px">4</div><div class="c r" style="left:860px;top:292px;width:101px">0</div><div class="c r" style="left:962px;top:292px;width:81px">0</div><div class="row" style="top:317px"></div><div class="c r" style="left:268px;top:317px;width:102px">12101105</div><div class="c l" style="left:371px;top:317px;width:105px"><span class="cj">炸金花</span></div><div class="c l" style="left:477px;top:317px;width:133px">12101105.DLL</div><div class="c r" style="left:611px;top:317px;width:115px">5</div><div class="c r" style="left:727px;top:317px;width:132px">5</div><div class="c r" style="left:860px;top:317px;width:101px">1</div><div class="c r" style="left:962px;top:317px;width:81px">0</div><div class="row" style="top:342px"></div><div class="rb" style="position:absolute;left:268px;width:775px;height:24px;top:342px"></div><div class="c r" style="left:268px;top:342px;width:102px">20161004</div><div class="c l" style="left:371px;top:342px;width:105px"><span class="cj">红中麻将</span></div><div class="c l" style="left:477px;top:342px;width:133px">20161004.DLL</div><div class="c r" style="left:611px;top:342px;width:115px">2</div><div class="c r" style="left:727px;top:342px;width:132px">2</div><div class="c r" style="left:860px;top:342px;width:101px">0</div><div class="c r" style="left:962px;top:342px;width:81px">0</div><div class="row" style="top:367px"></div><div class="c r" style="left:268px;top:367px;width:102px">20161010</div><div class="c l" style="left:371px;top:367px;width:105px"><span class="cj">广东推倒胡</span></div><div class="c l" style="left:477px;top:367px;width:133px">20161010.DLL</div><div class="c r" style="left:611px;top:367px;width:115px">4</div><div class="c r" style="left:727px;top:367px;width:132px">4</div><div class="c r" style="left:860px;top:367px;width:101px">0</div><div class="c r" style="left:962px;top:367px;width:81px">0</div><div class="row" style="top:392px"></div><div class="c r" style="left:268px;top:392px;width:102px">20170405</div><div class="c l" style="left:371px;top:392px;width:105px">21<span class="cj">点</span></div><div class="c l" style="left:477px;top:392px;width:133px">20170405.DLL</div><div class="c r" style="left:611px;top:392px;width:115px">4</div><div class="c r" style="left:727px;top:392px;width:132px">4</div><div class="c r" style="left:860px;top:392px;width:101px">0</div><div class="c r" style="left:962px;top:392px;width:81px">0</div><div class="row" style="top:417px"></div><div class="rg" style="position:absolute;left:268px;width:775px;height:24px;top:417px"></div><div class="c r" style="left:268px;top:417px;width:102px">20173124</div><div class="c l" style="left:371px;top:417px;width:105px"><span class="cj">血战麻将</span></div><div class="c l" style="left:477px;top:417px;width:133px">20173124.DLL</div><div class="c r" style="left:611px;top:417px;width:115px">4</div><div class="c r" style="left:727px;top:417px;width:132px">4</div><div class="c r" style="left:860px;top:417px;width:101px">0</div><div class="c r" style="left:962px;top:417px;width:81px">0</div><div class="row" style="top:442px"></div><div class="c r" style="left:268px;top:442px;width:102px">23510004</div><div class="c l" style="left:371px;top:442px;width:105px"><span class="cj">山西推倒胡</span></div><div class="c l" style="left:477px;top:442px;width:133px">23510004.DLL</div><div class="c r" style="left:611px;top:442px;width:115px">4</div><div class="c r" style="left:727px;top:442px;width:132px">4</div><div class="c r" style="left:860px;top:442px;width:101px">0</div><div class="c r" style="left:962px;top:442px;width:81px">0</div><div class="row" style="top:467px"></div><div class="c r" style="left:268px;top:467px;width:102px">26600003</div><div class="c l" style="left:371px;top:467px;width:105px"><span class="cj">潮汕三人</span></div><div class="c l" style="left:477px;top:467px;width:133px">26600003.DLL</div><div class="c r" style="left:611px;top:467px;width:115px">3</div><div class="c r" style="left:727px;top:467px;width:132px">3</div><div class="c r" style="left:860px;top:467px;width:101px">0</div><div class="c r" style="left:962px;top:467px;width:81px">0</div><div class="row" style="top:492px"></div><div class="rb" style="position:absolute;left:268px;width:775px;height:24px;top:492px"></div><div class="c r" style="left:268px;top:492px;width:102px">26600004</div><div class="c l" style="left:371px;top:492px;width:105px"><span class="cj">潮汕麻将</span></div><div class="c l" style="left:477px;top:492px;width:133px">26600004.DLL</div><div class="c r" style="left:611px;top:492px;width:115px">4</div><div class="c r" style="left:727px;top:492px;width:132px">4</div><div class="c r" style="left:860px;top:492px;width:101px">0</div><div class="c r" style="left:962px;top:492px;width:81px">0</div><div class="row" style="top:517px"></div><div class="c r" style="left:268px;top:517px;width:102px">37550102</div><div class="c l" style="left:371px;top:517px;width:105px"><span class="cj">猜拳</span></div><div class="c l" style="left:477px;top:517px;width:133px">37550102.DLL</div><div class="c r" style="left:611px;top:517px;width:115px">2</div><div class="c r" style="left:727px;top:517px;width:132px">2</div><div class="c r" style="left:860px;top:517px;width:101px">0</div><div class="c r" style="left:962px;top:517px;width:81px">0</div><div class="row" style="top:542px"></div><div class="c r" style="left:268px;top:542px;width:102px">30210005</div><div class="c l" style="left:371px;top:542px;width:105px">5<span class="cj">人斗地主</span></div><div class="c l" style="left:477px;top:542px;width:133px">30210005.DLL</div><div class="c r" style="left:611px;top:542px;width:115px">5</div><div class="c r" style="left:727px;top:542px;width:132px">5</div><div class="c r" style="left:860px;top:542px;width:101px">0</div><div class="c r" style="left:962px;top:542px;width:81px">0</div><div class="row" style="top:567px"></div><div class="rg" style="position:absolute;left:268px;width:775px;height:24px;top:567px"></div><div class="c r" style="left:268px;top:567px;width:102px">30000004</div><div class="c l" style="left:371px;top:567px;width:105px"><span class="cj">跑得快</span></div><div class="c l" style="left:477px;top:567px;width:133px">30000004.DLL</div><div class="c r" style="left:611px;top:567px;width:115px">2</div><div class="c r" style="left:727px;top:567px;width:132px">2</div><div class="c r" style="left:860px;top:567px;width:101px">0</div><div class="c r" style="left:962px;top:567px;width:81px">0</div><div class="row" style="top:592px"></div><div class="c r" style="left:268px;top:592px;width:102px">30000006</div><div class="c l" style="left:371px;top:592px;width:105px"><span class="cj">十点半</span></div><div class="c l" style="left:477px;top:592px;width:133px">30000006.DLL</div><div class="c r" style="left:611px;top:592px;width:115px">6</div><div class="c r" style="left:727px;top:592px;width:132px">6</div><div class="c r" style="left:860px;top:592px;width:101px">0</div><div class="c r" style="left:962px;top:592px;width:81px">0</div><div class="row" style="top:617px"></div><div class="c r" style="left:268px;top:617px;width:102px">30000200</div><div class="c l" style="left:371px;top:617px;width:105px"><span class="cj">百人牛牛</span></div><div class="c l" style="left:477px;top:617px;width:133px">30000200.DLL</div><div class="c r" style="left:611px;top:617px;width:115px">180</div><div class="c r" style="left:727px;top:617px;width:132px">180</div><div class="c r" style="left:860px;top:617px;width:101px">0</div><div class="c r" style="left:962px;top:617px;width:81px">0</div><div class="row" style="top:642px"></div><div class="rb" style="position:absolute;left:268px;width:775px;height:24px;top:642px"></div><div class="c r" style="left:268px;top:642px;width:102px">30000404</div><div class="c l" style="left:371px;top:642px;width:105px"><span class="cj">十三水</span></div><div class="c l" style="left:477px;top:642px;width:133px">30000404.DLL</div><div class="c r" style="left:611px;top:642px;width:115px">5</div><div class="c r" style="left:727px;top:642px;width:132px">5</div><div class="c r" style="left:860px;top:642px;width:101px">1</div><div class="c r" style="left:962px;top:642px;width:81px">0</div><div class="row" style="top:667px"></div><div class="c r" style="left:268px;top:667px;width:102px">30100008</div><div class="c l" style="left:371px;top:667px;width:105px"><span class="cj">牛牛</span></div><div class="c l" style="left:477px;top:667px;width:133px">30100008.DLL</div><div class="c r" style="left:611px;top:667px;width:115px">10</div><div class="c r" style="left:727px;top:667px;width:132px">5</div><div class="c r" style="left:860px;top:667px;width:101px">1</div><div class="c r" style="left:962px;top:667px;width:81px">0</div><div class="row" style="top:692px"></div><div class="c r" style="left:268px;top:692px;width:102px">11000100</div><div class="c l" style="left:371px;top:692px;width:105px"><span class="cj">飞禽走兽</span></div><div class="c l" style="left:477px;top:692px;width:133px">11000100.DLL</div><div class="c r" style="left:611px;top:692px;width:115px">180</div><div class="c r" style="left:727px;top:692px;width:132px">180</div><div class="c r" style="left:860px;top:692px;width:101px">0</div><div class="c r" style="left:962px;top:692px;width:81px">0</div><div class="row" style="top:717px"></div><div class="rg" style="position:absolute;left:268px;width:775px;height:24px;top:717px"></div><div class="c r" style="left:268px;top:717px;width:102px">30100108</div><div class="c l" style="left:371px;top:717px;width:105px"><span class="cj">三公</span></div><div class="c l" style="left:477px;top:717px;width:133px">30100108.DLL</div><div class="c r" style="left:611px;top:717px;width:115px">8</div><div class="c r" style="left:727px;top:717px;width:132px">8</div><div class="c r" style="left:860px;top:717px;width:101px">1</div><div class="c r" style="left:962px;top:717px;width:81px">0</div><div class="row" style="top:742px"></div><div class="c r" style="left:268px;top:742px;width:102px">36610103</div><div class="c l" style="left:371px;top:742px;width:105px"><span class="cj">斗地主</span></div><div class="c l" style="left:477px;top:742px;width:133px">36610103.DLL</div><div class="c r" style="left:611px;top:742px;width:115px">3</div><div class="c r" style="left:727px;top:742px;width:132px">3</div><div class="c r" style="left:860px;top:742px;width:101px">0</div><div class="c r" style="left:962px;top:742px;width:81px">0</div><div class="row" style="top:767px"></div><div class="c r" style="left:268px;top:767px;width:102px">37460003</div><div class="c l" style="left:371px;top:767px;width:105px"><span class="cj">跑胡子</span></div><div class="c l" style="left:477px;top:767px;width:133px">37460003.DLL</div><div class="c r" style="left:611px;top:767px;width:115px">2</div><div class="c r" style="left:727px;top:767px;width:132px">2</div><div class="c r" style="left:860px;top:767px;width:101px">0</div><div class="c r" style="left:962px;top:767px;width:81px">0</div><div class="row" style="top:792px"></div><div class="rb" style="position:absolute;left:268px;width:775px;height:24px;top:792px"></div><div class="c r" style="left:268px;top:792px;width:102px">37910005</div><div class="c l" style="left:371px;top:792px;width:105px"><span class="cj">窝龙</span></div><div class="c l" style="left:477px;top:792px;width:133px">37910005.DLL</div><div class="c r" style="left:611px;top:792px;width:115px">5</div><div class="c r" style="left:727px;top:792px;width:132px">5</div><div class="c r" style="left:860px;top:792px;width:101px">0</div><div class="c r" style="left:962px;top:792px;width:81px">0</div><div class="row" style="top:817px"></div><div class="c r" style="left:268px;top:817px;width:102px">30100110</div><div class="c l" style="left:371px;top:817px;width:105px"><span class="cj">点子牛</span></div><div class="c l" style="left:477px;top:817px;width:133px">30100110.DLL</div><div class="c r" style="left:611px;top:817px;width:115px">10</div><div class="c r" style="left:727px;top:817px;width:132px">10</div><div class="c r" style="left:860px;top:817px;width:101px">1</div><div class="c r" style="left:962px;top:817px;width:81px">0</div><div class="row" style="top:842px"></div><div class="c r" style="left:268px;top:842px;width:102px">30000604</div><div class="c l" style="left:371px;top:842px;width:105px"><span class="cj">二八杠</span></div><div class="c l" style="left:477px;top:842px;width:133px">30000604.DLL</div><div class="c r" style="left:611px;top:842px;width:115px">180</div><div class="c r" style="left:727px;top:842px;width:132px">180</div><div class="c r" style="left:860px;top:842px;width:101px">0</div><div class="c r" style="left:962px;top:842px;width:81px">0</div><div class="row" style="top:867px"></div><div class="rg" style="position:absolute;left:268px;width:775px;height:24px;top:867px"></div><div class="c r" style="left:268px;top:867px;width:102px">40000000</div><div class="c l" style="left:371px;top:867px;width:105px"><span class="cj">红包扫雷</span></div><div class="c l" style="left:477px;top:867px;width:133px">40000000.DLL</div><div class="c r" style="left:611px;top:867px;width:115px">180</div><div class="c r" style="left:727px;top:867px;width:132px">180</div><div class="c r" style="left:860px;top:867px;width:101px">0</div><div class="c r" style="left:962px;top:867px;width:81px">0</div><div class="row" style="top:892px"></div><div class="c r" style="left:268px;top:892px;width:102px">40000100</div><div class="c l" style="left:371px;top:892px;width:105px"><span class="cj">龙虎斗</span></div><div class="c l" style="left:477px;top:892px;width:133px">40000100.Dll</div><div class="c r" style="left:611px;top:892px;width:115px">180</div><div class="c r" style="left:727px;top:892px;width:132px">180</div><div class="c r" style="left:860px;top:892px;width:101px">0</div><div class="c r" style="left:962px;top:892px;width:81px">0</div><div class="row" style="top:917px"></div><div class="c r" style="left:268px;top:917px;width:102px">30000007</div><div class="c l" style="left:371px;top:917px;width:105px"><span class="cj">德州扑克</span></div><div class="c l" style="left:477px;top:917px;width:133px">30000007.DLL</div><div class="c r" style="left:611px;top:917px;width:115px">9</div><div class="c r" style="left:727px;top:917px;width:132px">5</div><div class="c r" style="left:860px;top:917px;width:101px">0</div><div class="c r" style="left:962px;top:917px;width:81px">1</div><div class="row" style="top:942px"></div><div class="rb" style="position:absolute;left:268px;width:775px;height:24px;top:942px"></div><div class="c r csel" style="left:268px;top:942px;width:102px">30100210</div><div class="c l" style="left:371px;top:942px;width:105px"><span class="cj">斗公牛</span></div><div class="c l" style="left:477px;top:942px;width:133px">30100210.DLL</div><div class="c r" style="left:611px;top:942px;width:115px">10</div><div class="c r" style="left:727px;top:942px;width:132px">10</div><div class="c r" style="left:860px;top:942px;width:101px">1</div><div class="c r null" style="left:962px;top:942px;width:81px">(Null)</div><div class="vl" style="left:267px;top:192px;height:25px;background:#dadada"></div><div class="vl" style="left:267px;top:217px;height:750px;background:#d8d8d8"></div><div class="vl" style="left:370px;top:192px;height:25px;background:#dadada"></div><div class="vl" style="left:370px;top:217px;height:750px;background:#ebebeb"></div><div class="vl" style="left:476px;top:192px;height:25px;background:#dadada"></div><div class="vl" style="left:476px;top:217px;height:750px;background:#ebebeb"></div><div class="vl" style="left:610px;top:192px;height:25px;background:#dadada"></div><div class="vl" style="left:610px;top:217px;height:750px;background:#ebebeb"></div><div class="vl" style="left:726px;top:192px;height:25px;background:#dadada"></div><div class="vl" style="left:726px;top:217px;height:750px;background:#ebebeb"></div><div class="vl" style="left:859px;top:192px;height:25px;background:#dadada"></div><div class="vl" style="left:859px;top:217px;height:750px;background:#ebebeb"></div><div class="vl" style="left:961px;top:192px;height:25px;background:#dadada"></div><div class="vl" style="left:961px;top:217px;height:750px;background:#ebebeb"></div><div class="vl" style="left:1043px;top:192px;height:25px;background:#dadada"></div><div class="vl" style="left:1043px;top:217px;height:750px;background:#ebebeb"></div><div style="position:absolute;left:254px;top:942px;width:13px;height:24px;background:#d9e9f8"></div><svg class="a" style="left:258px;top:947px" width="8" height="13" viewBox="0 0 8 13"><path d="M0.8,0.8 L7,6.5 L0.8,12.2 Z" fill="#000"/></svg></div>
</body></html>
